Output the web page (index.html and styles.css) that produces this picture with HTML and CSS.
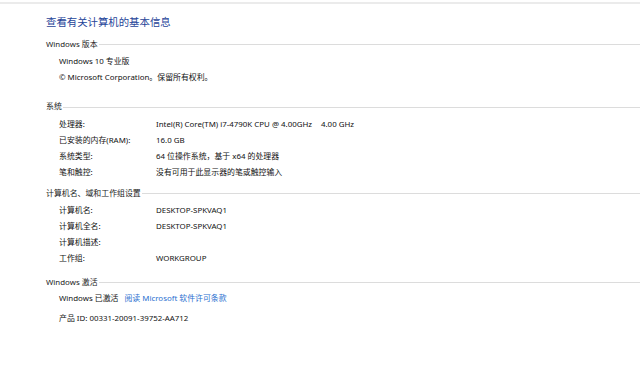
FILE: index.html
```html
<!DOCTYPE html>
<html lang="zh-CN">
<head>
<meta charset="utf-8">
<title>系统</title>
<link rel="stylesheet" href="styles.css">
</head>
<body>
<div class="topbar"></div>
<main class="page">
  <h1 class="title">查看有关计算机的基本信息</h1>

  <section class="group g-edition">
    <div class="heading"><span>Windows 版本</span></div>
    <div class="list">
      <div class="line">Windows 10 专业版</div>
      <div class="line">© Microsoft Corporation。保留所有权利。</div>
    </div>
  </section>

  <section class="group g-system">
    <div class="heading"><span>系统</span></div>
    <div class="list">
      <div class="row"><span class="label">处理器:</span><span class="value">Intel(R) Core(TM) i7-4790K CPU @ 4.00GHz<span class="gap"></span>4.00 GHz</span></div>
      <div class="row"><span class="label">已安装的内存(RAM):</span><span class="value">16.0 GB</span></div>
      <div class="row"><span class="label">系统类型:</span><span class="value">64 位操作系统，基于 x64 的处理器</span></div>
      <div class="row"><span class="label">笔和触控:</span><span class="value">没有可用于此显示器的笔或触控输入</span></div>
    </div>
  </section>

  <section class="group g-computer">
    <div class="heading"><span>计算机名、域和工作组设置</span></div>
    <div class="list">
      <div class="row"><span class="label">计算机名:</span><span class="value">DESKTOP-SPKVAQ1</span></div>
      <div class="row"><span class="label">计算机全名:</span><span class="value">DESKTOP-SPKVAQ1</span></div>
      <div class="row"><span class="label">计算机描述:</span><span class="value"></span></div>
      <div class="row"><span class="label">工作组:</span><span class="value">WORKGROUP</span></div>
    </div>
  </section>

  <section class="group g-activation">
    <div class="heading"><span>Windows 激活</span></div>
    <div class="list">
      <div class="line">Windows 已激活<a class="link" href="#">阅读 Microsoft 软件许可条款</a></div>
      <div class="line product">产品 ID: 00331-20091-39752-AA712</div>
    </div>
  </section>
</main>
</body>
</html>
```

FILE: styles.css
```css
html, body {
  margin: 0;
  padding: 0;
  background: #ffffff;
}

body {
  font-family: "Noto Sans", "Noto Sans CJK SC", sans-serif;
  font-size: 7.9px;
  color: #111111;
  width: 640px;
  height: 390px;
  overflow: hidden;
}

.topbar {
  margin-top: 2px;
  height: 2px;
  background: #ebebeb;
}

.page {
  padding-left: 46px;
}

.title {
  margin: 10px 0 0 0;
  font-size: 10.4px;
  font-weight: normal;
  line-height: 16px;
  height: 16px;
  color: #1f4599;
}

.group {
  display: flex;
  flex-direction: column;
}

.heading {
  display: flex;
  align-items: center;
  height: 16px;
  line-height: 16px;
  color: #222222;
}

.heading::after {
  content: "";
  flex: 1;
  height: 1px;
  background: #dcdcdc;
  margin-left: 1px;
  position: relative;
  top: 1px;
}

.list {
  display: flex;
  flex-direction: column;
  padding-left: 13px;
}

.line,
.row {
  height: 16px;
  line-height: 16px;
  white-space: nowrap;
}

.row {
  display: flex;
}

.label {
  width: 97px;
  flex: none;
}

.gap {
  display: inline-block;
  width: 9px;
}

.link {
  color: #2a6fd0;
  text-decoration: none;
  margin-left: 6px;
}

.g-edition { margin-top: 5.5px; }
.g-edition .list { margin-top: 1.5px; }

.g-system { margin-top: 13px; }
.g-system .list { margin-top: 1.5px; }

.g-computer { margin-top: 5px; }
.g-computer .list { margin-top: 1px; }

.g-activation { margin-top: 8px; }
.g-activation .list { margin-top: 0; }

.product { margin-top: 4.5px; }
```
